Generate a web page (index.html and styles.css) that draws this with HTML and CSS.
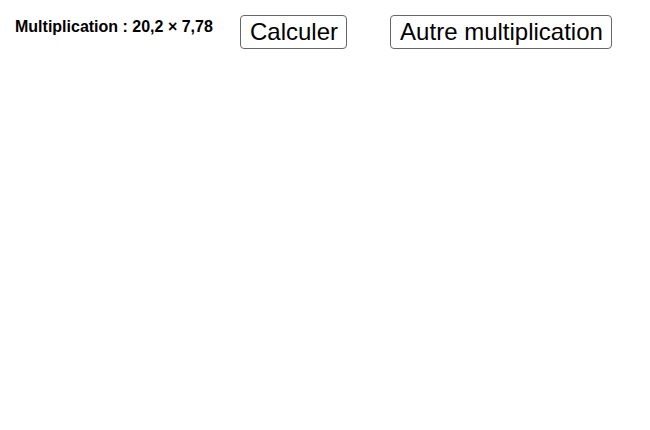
FILE: index.html
```html
<!DOCTYPE html>
<html lang="fr">
<head>
<meta charset="utf-8">
<title>Multiplication</title>
<link rel="stylesheet" href="styles.css">
</head>
<body>
<div class="toolbar">
  <span class="label">Multiplication : 20,2 × 7,78</span>
  <button class="btn btn-calc" type="button">Calculer</button>
  <button class="btn btn-other" type="button">Autre multiplication</button>
</div>
</body>
</html>
```
FILE: styles.css
```css
html, body {
  margin: 0;
  padding: 0;
  background: #ffffff;
}

body {
  width: 650px;
  height: 430px;
  font-family: "Liberation Sans", Arial, sans-serif;
  color: #000000;
}

.toolbar {
  display: flex;
  align-items: flex-start;
  padding: 15px 0 0 15px;
}

.label {
  font-size: 16px;
  font-weight: bold;
  line-height: 18px;
  margin-top: 3px;
  width: 225px;
  white-space: nowrap;
}

.btn {
  box-sizing: border-box;
  height: 34px;
  padding: 0 8px 0 9px;
  font-family: "Liberation Sans", Arial, sans-serif;
  font-size: 24px;
  line-height: 32px;
  color: #000000;
  background: #ffffff;
  border: 1px solid #666666;
  border-radius: 4px;
  white-space: nowrap;
}

.btn-calc {
  width: 107px;
}

.btn-other {
  margin-left: 43px;
  width: 222px;
}
```
